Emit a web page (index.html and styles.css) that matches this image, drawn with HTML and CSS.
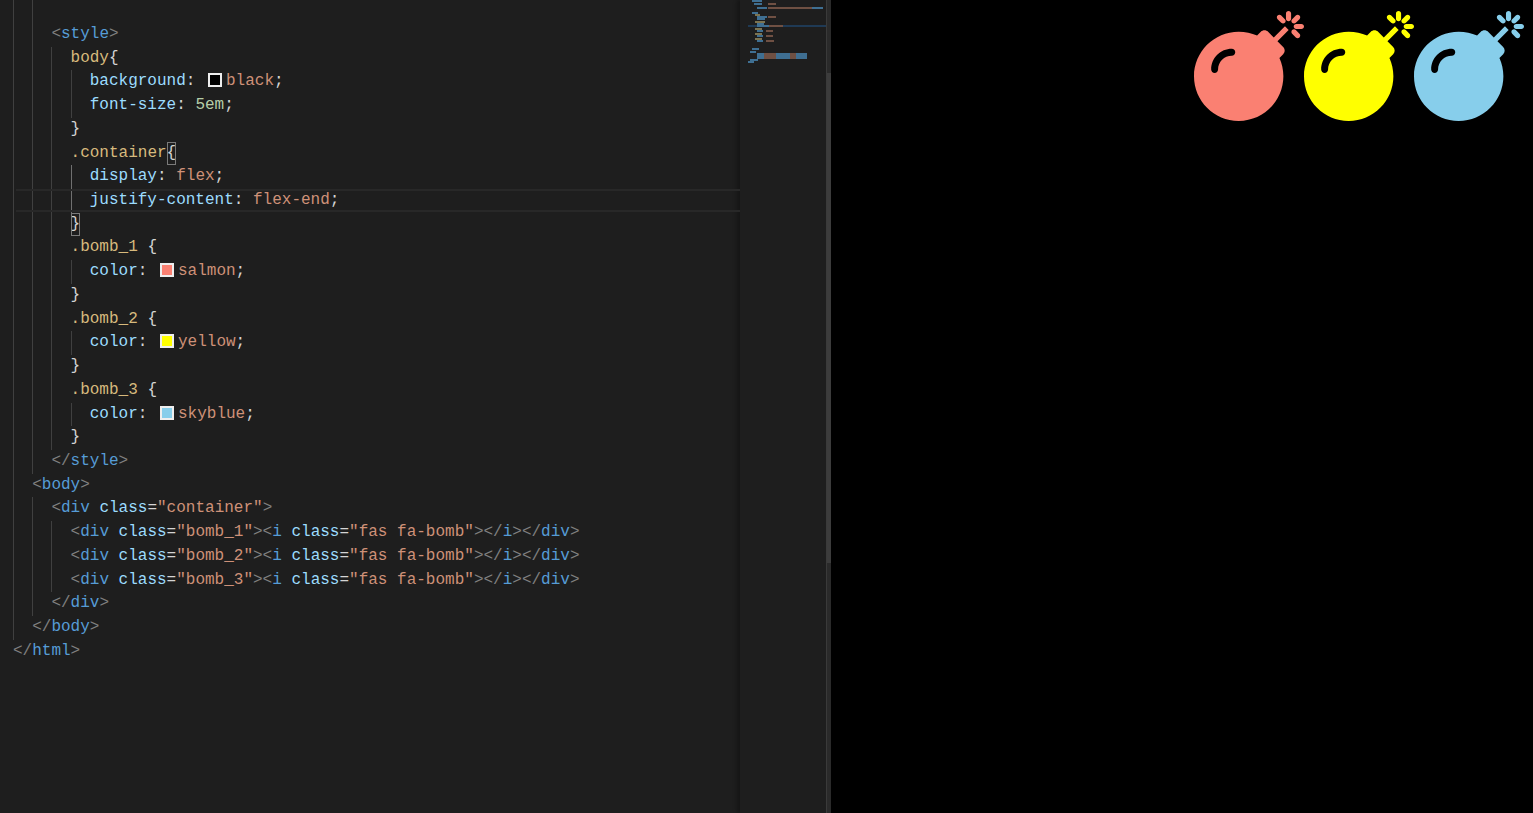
FILE: index.html
```html
<!DOCTYPE html>
<html lang="en">
<head>
    <meta charset="UTF-8">
    <title>Bombs</title>
    <link rel="stylesheet" href="styles.css">
</head>
<body>
    <div class="editor">
        <div class="code">
            <div class="line line-top"><i class="guide"></i><i class="guide"></i></div>
            <div class="line"><i class="guide"></i><i class="guide"></i><b class="p">&lt;</b><b class="t">style</b><b class="p">&gt;</b></div>
            <div class="line"><i class="guide"></i><i class="guide"></i><i class="guide"></i><b class="s">body</b><b class="b">{</b></div>
            <div class="line"><i class="guide"></i><i class="guide"></i><i class="guide"></i><i class="guide"></i><b class="a">background</b><b class="b">: </b><span class="swatch swatch-black"></span><b class="v">black</b><b class="b">;</b></div>
            <div class="line"><i class="guide"></i><i class="guide"></i><i class="guide"></i><i class="guide"></i><b class="a">font-size</b><b class="b">: </b><b class="n">5em</b><b class="b">;</b></div>
            <div class="line"><i class="guide"></i><i class="guide"></i><i class="guide"></i><b class="b">}</b></div>
            <div class="line"><i class="guide"></i><i class="guide"></i><i class="guide"></i><b class="s">.container</b><b class="b match">{</b></div>
            <div class="line"><i class="guide"></i><i class="guide"></i><i class="guide"></i><i class="guide guide-active"></i><b class="a">display</b><b class="b">: </b><b class="v">flex</b><b class="b">;</b></div>
            <div class="line line-current"><i class="guide"></i><i class="guide"></i><i class="guide"></i><i class="guide guide-active"></i><b class="a">justify-content</b><b class="b">: </b><b class="v">flex-end</b><b class="b">;</b></div>
            <div class="line"><i class="guide"></i><i class="guide"></i><i class="guide"></i><b class="b match">}</b></div>
            <div class="line"><i class="guide"></i><i class="guide"></i><i class="guide"></i><b class="s">.bomb_1</b><b class="b"> {</b></div>
            <div class="line"><i class="guide"></i><i class="guide"></i><i class="guide"></i><i class="guide"></i><b class="a">color</b><b class="b">: </b><span class="swatch swatch-salmon"></span><b class="v">salmon</b><b class="b">;</b></div>
            <div class="line"><i class="guide"></i><i class="guide"></i><i class="guide"></i><b class="b">}</b></div>
            <div class="line"><i class="guide"></i><i class="guide"></i><i class="guide"></i><b class="s">.bomb_2</b><b class="b"> {</b></div>
            <div class="line"><i class="guide"></i><i class="guide"></i><i class="guide"></i><i class="guide"></i><b class="a">color</b><b class="b">: </b><span class="swatch swatch-yellow"></span><b class="v">yellow</b><b class="b">;</b></div>
            <div class="line"><i class="guide"></i><i class="guide"></i><i class="guide"></i><b class="b">}</b></div>
            <div class="line"><i class="guide"></i><i class="guide"></i><i class="guide"></i><b class="s">.bomb_3</b><b class="b"> {</b></div>
            <div class="line"><i class="guide"></i><i class="guide"></i><i class="guide"></i><i class="guide"></i><b class="a">color</b><b class="b">: </b><span class="swatch swatch-blue"></span><b class="v">skyblue</b><b class="b">;</b></div>
            <div class="line"><i class="guide"></i><i class="guide"></i><i class="guide"></i><b class="b">}</b></div>
            <div class="line"><i class="guide"></i><i class="guide"></i><b class="p">&lt;/</b><b class="t">style</b><b class="p">&gt;</b></div>
            <div class="line"><i class="guide"></i><b class="p">&lt;</b><b class="t">body</b><b class="p">&gt;</b></div>
            <div class="line"><i class="guide"></i><i class="guide"></i><b class="p">&lt;</b><b class="t">div</b><b class="a"> class</b><b class="b">=</b><b class="v">"container"</b><b class="p">&gt;</b></div>
            <div class="line"><i class="guide"></i><i class="guide"></i><i class="guide"></i><b class="p">&lt;</b><b class="t">div</b><b class="a"> class</b><b class="b">=</b><b class="v">"bomb_1"</b><b class="p">&gt;&lt;</b><b class="t">i</b><b class="a"> class</b><b class="b">=</b><b class="v">"fas fa-bomb"</b><b class="p">&gt;&lt;/</b><b class="t">i</b><b class="p">&gt;&lt;/</b><b class="t">div</b><b class="p">&gt;</b></div>
            <div class="line"><i class="guide"></i><i class="guide"></i><i class="guide"></i><b class="p">&lt;</b><b class="t">div</b><b class="a"> class</b><b class="b">=</b><b class="v">"bomb_2"</b><b class="p">&gt;&lt;</b><b class="t">i</b><b class="a"> class</b><b class="b">=</b><b class="v">"fas fa-bomb"</b><b class="p">&gt;&lt;/</b><b class="t">i</b><b class="p">&gt;&lt;/</b><b class="t">div</b><b class="p">&gt;</b></div>
            <div class="line"><i class="guide"></i><i class="guide"></i><i class="guide"></i><b class="p">&lt;</b><b class="t">div</b><b class="a"> class</b><b class="b">=</b><b class="v">"bomb_3"</b><b class="p">&gt;&lt;</b><b class="t">i</b><b class="a"> class</b><b class="b">=</b><b class="v">"fas fa-bomb"</b><b class="p">&gt;&lt;/</b><b class="t">i</b><b class="p">&gt;&lt;/</b><b class="t">div</b><b class="p">&gt;</b></div>
            <div class="line"><i class="guide"></i><i class="guide"></i><b class="p">&lt;/</b><b class="t">div</b><b class="p">&gt;</b></div>
            <div class="line"><i class="guide"></i><b class="p">&lt;/</b><b class="t">body</b><b class="p">&gt;</b></div>
            <div class="line"><b class="p">&lt;/</b><b class="t">html</b><b class="p">&gt;</b></div>
        </div>
        <svg class="minimap" width="86" height="813" viewBox="0 0 86 813">
            <rect x="8" y="25" width="78" height="2" fill="#1f3a55"/>
            <g fill="#3f6f92">
                <rect x="12" y="0" width="10" height="2"/>
                <rect x="14" y="3" width="8" height="2"/>
                <rect x="17" y="7" width="10" height="2"/>
                <rect x="72" y="7" width="11" height="2"/>
                <rect x="12" y="12" width="6" height="2"/>
                <rect x="17" y="16" width="10" height="2"/>
                <rect x="17" y="18" width="8" height="2"/>
                <rect x="17" y="23" width="7" height="2"/>
                <rect x="17" y="25" width="14" height="2"/>
                <rect x="17" y="30" width="6" height="2"/>
                <rect x="17" y="35" width="6" height="2"/>
                <rect x="17" y="40" width="6" height="2"/>
                <rect x="12" y="48" width="7" height="2"/>
                <rect x="10" y="51" width="6" height="2"/>
                <rect x="17" y="53" width="7" height="6"/>
                <rect x="36" y="53" width="14" height="6"/>
                <rect x="56" y="53" width="11" height="6"/>
                <rect x="10" y="59" width="8" height="2"/>
                <rect x="8" y="61" width="6" height="2"/>
            </g>
            <g fill="#6f5043">
                <rect x="28" y="3" width="8" height="2"/>
                <rect x="28" y="7" width="44" height="2"/>
                <rect x="28" y="16" width="8" height="2"/>
                <rect x="29" y="25" width="14" height="2"/>
                <rect x="26" y="30" width="7" height="2"/>
                <rect x="26" y="35" width="7" height="2"/>
                <rect x="26" y="40" width="8" height="2"/>
                <rect x="24" y="53" width="12" height="6"/>
                <rect x="50" y="53" width="6" height="6"/>
            </g>
            <g fill="#7c7350">
                <rect x="15" y="14" width="5" height="2"/>
                <rect x="15" y="21" width="10" height="2"/>
                <rect x="15" y="28" width="7" height="2"/>
                <rect x="15" y="33" width="7" height="2"/>
                <rect x="15" y="38" width="7" height="2"/>
            </g>
        </svg>
        <div class="scrollbar"><div class="scroll-thumb"></div></div>
    </div>
    <div class="preview">
        <div class="bomb bomb_1"><svg viewBox="0 0 512 512"><use href="#bomb"/></svg></div>
        <div class="bomb bomb_2"><svg viewBox="0 0 512 512"><use href="#bomb"/></svg></div>
        <div class="bomb bomb_3"><svg viewBox="0 0 512 512"><use href="#bomb"/></svg></div>
    </div>
    <svg class="defs" width="0" height="0">
        <symbol id="bomb" viewBox="0 0 512 512">
            <path fill="currentColor" d="M440.5 88.5l-52 52L415 167c9.4 9.4 9.4 24.6 0 33.9l-17.4 17.4c11.8 26.1 18.4 55.1 18.4 85.6 0 114.9-93.1 208-208 208S0 418.9 0 304 93.1 96 208 96c30.5 0 59.5 6.6 85.6 18.4L311 97c9.4-9.4 24.6-9.4 33.9 0l26.5 26.5 52-52 17.1 17zM500 60h-24c-6.6 0-12 5.4-12 12s5.4 12 12 12h24c6.6 0 12-5.4 12-12s-5.4-12-12-12zM440 0c-6.6 0-12 5.4-12 12v24c0 6.6 5.4 12 12 12s12-5.4 12-12V12c0-6.6-5.4-12-12-12zm33.9 55l17-17c4.7-4.7 4.7-12.3 0-17-4.7-4.7-12.3-4.7-17 0l-17 17c-4.7 4.7-4.7 12.3 0 17 4.8 4.7 12.4 4.7 17 0zm-67.8 0c4.7 4.7 12.3 4.7 17 0 4.7-4.7 4.7-12.3 0-17l-17-17c-4.7-4.7-12.3-4.7-17 0-4.7 4.7-4.7 12.3 0 17l17 17zm67.8 34c-4.7-4.7-12.3-4.7-17 0-4.7 4.7-4.7 12.3 0 17l17 17c4.7 4.7 12.3 4.7 17 0 4.7-4.7 4.7-12.3 0-17l-17-17zM112 272c0-35.3 28.7-64 64-64 8.8 0 16-7.2 16-16s-7.2-16-16-16c-52.9 0-96 43.1-96 96 0 8.8 7.2 16 16 16s16-7.2 16-16z"/>
        </symbol>
    </svg>
</body>
</html>
```

FILE: styles.css
```css
body {
    display: flex;
    height: 100vh;
    margin: 0;
    overflow: hidden;
    background: black;
}
.editor {
    display: flex;
    flex: none;
    width: 831px;
    background-color: #1e1e1e;
}
.code {
    flex: none;
    width: 740px;
    padding-left: 13px;
    box-sizing: border-box;
    font-family: 'Liberation Mono', monospace;
    font-size: 16px;
    line-height: 23.73px;
    color: #d4d4d4;
}
.code b {
    font-weight: normal;
}
.line {
    display: flex;
    position: relative;
    height: 23.73px;
    white-space: pre;
}
.line > b {
    flex: none;
}
.line-top {
    height: 23px;
}
.line-current::before {
    content: "";
    position: absolute;
    left: 3px;
    right: 0;
    top: 0;
    bottom: 1px;
    border-top: 2px solid #282828;
    border-bottom: 2px solid #282828;
}
.guide {
    flex: none;
    width: 19.2px;
    box-sizing: border-box;
    border-left: 1px solid #404040;
}
.guide-active {
    border-left-color: #707070;
}
.p { color: #808080; }
.t { color: #569cd6; }
.a { color: #9cdcfe; }
.v { color: #ce9178; }
.n { color: #b5cea8; }
.s { color: #d7ba7d; }
.match {
    outline: 1px solid #7a7a7a;
    outline-offset: -1px;
}
.swatch {
    flex: none;
    width: 14px;
    height: 14px;
    box-sizing: border-box;
    margin: 3px 4px 0 3px;
    border: 2px solid #eeeeee;
}
.swatch-black { background-color: black; }
.swatch-salmon { background-color: salmon; }
.swatch-yellow { background-color: yellow; }
.swatch-blue { background-color: skyblue; }
.minimap {
    display: block;
    flex: none;
    box-shadow: -3px 0 4px rgba(0, 0, 0, 0.3);
}
.scrollbar {
    flex: none;
    width: 5px;
    background-color: #2a2a2a;
    border-left: 1px solid #3a3a3a;
    box-sizing: border-box;
}
.scroll-thumb {
    height: 490px;
    margin-top: 73px;
    background-color: #3c3c3c;
}
.preview {
    flex: 1;
    display: flex;
    justify-content: flex-end;
    align-items: flex-start;
    padding: 11px 9px 0 0;
}
.bomb svg {
    display: block;
    width: 110px;
    height: 110px;
}
.bomb_1 { color: salmon; }
.bomb_2 { color: yellow; }
.bomb_3 { color: skyblue; }
.defs {
    position: absolute;
}
```
